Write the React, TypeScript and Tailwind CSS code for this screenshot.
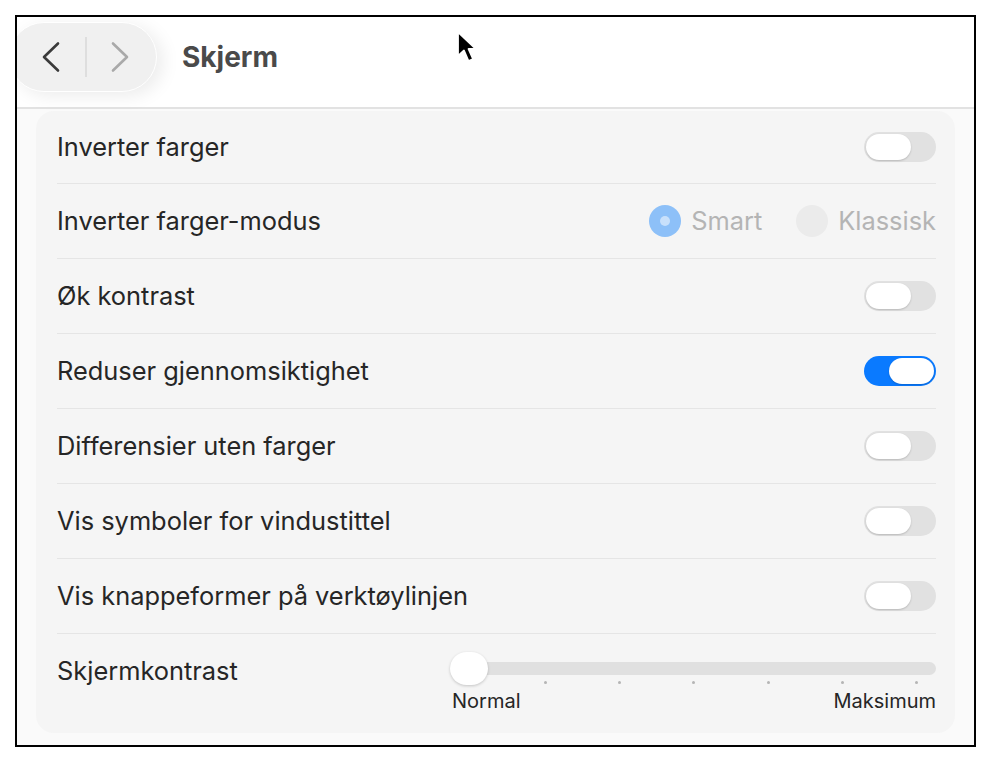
const rows = [
  { label: 'Inverter farger', kind: 'toggle', on: false },
  { label: 'Inverter farger-modus', kind: 'radio', on: false },
  { label: 'Øk kontrast', kind: 'toggle', on: false },
  { label: 'Reduser gjennomsiktighet', kind: 'toggle', on: true },
  { label: 'Differensier uten farger', kind: 'toggle', on: false },
  { label: 'Vis symboler for vindustittel', kind: 'toggle', on: false },
  { label: 'Vis knappeformer på verktøylinjen', kind: 'toggle', on: false },
];

const Chevron = ({ dir, color }: { dir: 'left' | 'right'; color: string }) => (
  <svg width="20" height="32" viewBox="0 0 20 32" fill="none">
    <path
      d={dir === 'left' ? 'M17 2.5 L3 16 L17 29.5' : 'M3 2.5 L17 16 L3 29.5'}
      stroke={color}
      strokeWidth="2.6"
      strokeLinecap="round"
      strokeLinejoin="round"
    />
  </svg>
);

const Toggle = ({ on }: { on: boolean }) => (
  <div
    className={`flex h-[30px] w-[72px] items-center rounded-full p-[2px] ${
      on ? 'justify-end bg-[#0a7aff]' : 'justify-start bg-[#e1e1e1]'
    }`}
  >
    <div className="h-[26px] w-[45px] rounded-full bg-white shadow-[0_1px_2px_rgba(0,0,0,0.18)]" />
  </div>
);

const RadioGroup = () => (
  <div className="flex items-center gap-[34px] text-[25.4px] text-[#b4b4b4]">
    <div className="flex items-center gap-[10px]">
      <div className="flex h-[32px] w-[32px] items-center justify-center rounded-full bg-[#8dc0f8]">
        <div className="h-[10px] w-[10px] rounded-full bg-[#c8e0fb]" />
      </div>
      <span>Smart</span>
    </div>
    <div className="flex items-center gap-[10px]">
      <div className="h-[32px] w-[32px] rounded-full bg-[#ebebeb]" />
      <span>Klassisk</span>
    </div>
  </div>
);

const Slider = () => (
  <div className="flex w-[484px] flex-col">
    <div className="relative h-[28px]">
      <div className="absolute left-0 right-0 top-[9px] h-[13px] rounded-full bg-[#e0e0e0]" />
      <div className="absolute left-[-2px] top-[-1px] h-[33px] w-[38px] rounded-full bg-white shadow-[0_1px_3px_rgba(0,0,0,0.2)]" />
    </div>
    <div className="flex justify-between pl-[92px] pr-[18px]">
      {[0, 1, 2, 3, 4, 5].map((i) => (
        <div key={i} className="h-[3px] w-[3px] rounded-full bg-[#b5b5b5]" />
      ))}
    </div>
    <div className="mt-[5px] flex justify-between text-[20px] leading-[24px] text-[#262626]">
      <span>Normal</span>
      <span>Maksimum</span>
    </div>
  </div>
);

const Cursor = () => (
  <svg className="absolute left-[454px] top-[29px]" width="26" height="38" viewBox="0 0 26 38">
    <path
      d="M4 3 L4 27 L10 21.5 L14.5 32 L19 30 L14.5 20 L22 20 Z"
      fill="#000"
      stroke="#fff"
      strokeWidth="1.8"
      strokeLinejoin="round"
    />
  </svg>
);

export default function App() {
  return (
    <div className="relative h-[762px] w-[991px] bg-white pl-[15px] pt-[15px] font-['Inter','Noto_Sans',sans-serif]">
      <div className="flex h-[732px] w-[961px] flex-col overflow-hidden border-2 border-black bg-[#fafafa]">
        <header className="flex h-[92px] shrink-0 items-center border-b-2 border-[#e2e2e2] bg-white pb-[10px]">
          <div className="ml-[-8px] flex h-[70px] w-[148px] items-center rounded-full border border-white bg-[#f0f0f0] pl-[31px] shadow-[6px_4px_18px_rgba(0,0,0,0.08)]">
            <Chevron dir="left" color="#3a3a3a" />
            <div className="ml-[24px] h-[40px] w-[2px] bg-[#dedede]" />
            <div className="ml-[23px]">
              <Chevron dir="right" color="#a9a9a9" />
            </div>
          </div>
          <h1 className="ml-[25px] text-[28px] font-bold text-[#4a4a4a]">Skjerm</h1>
        </header>

        <main className="px-[19px] pt-[2px]">
          <div className="rounded-[18px] bg-[#f5f5f5] px-[21px] pr-[19px]">
            {rows.map((r, i) => (
              <div
                key={r.label}
                className={`flex items-center justify-between ${
                  i === 0 ? 'h-[72px]' : 'h-[75px] border-t border-[#e5e5e5]'
                }`}
              >
                <span className="text-[25.4px] text-[#262626]">{r.label}</span>
                {r.kind === 'toggle' ? <Toggle on={r.on} /> : <RadioGroup />}
              </div>
            ))}
            <div className="flex h-[100px] justify-between border-t border-[#e5e5e5] pt-[19px]">
              <span className="text-[25.4px] leading-[36px] text-[#262626]">Skjermkontrast</span>
              <Slider />
            </div>
          </div>
        </main>
      </div>
      <Cursor />
    </div>
  );
}
